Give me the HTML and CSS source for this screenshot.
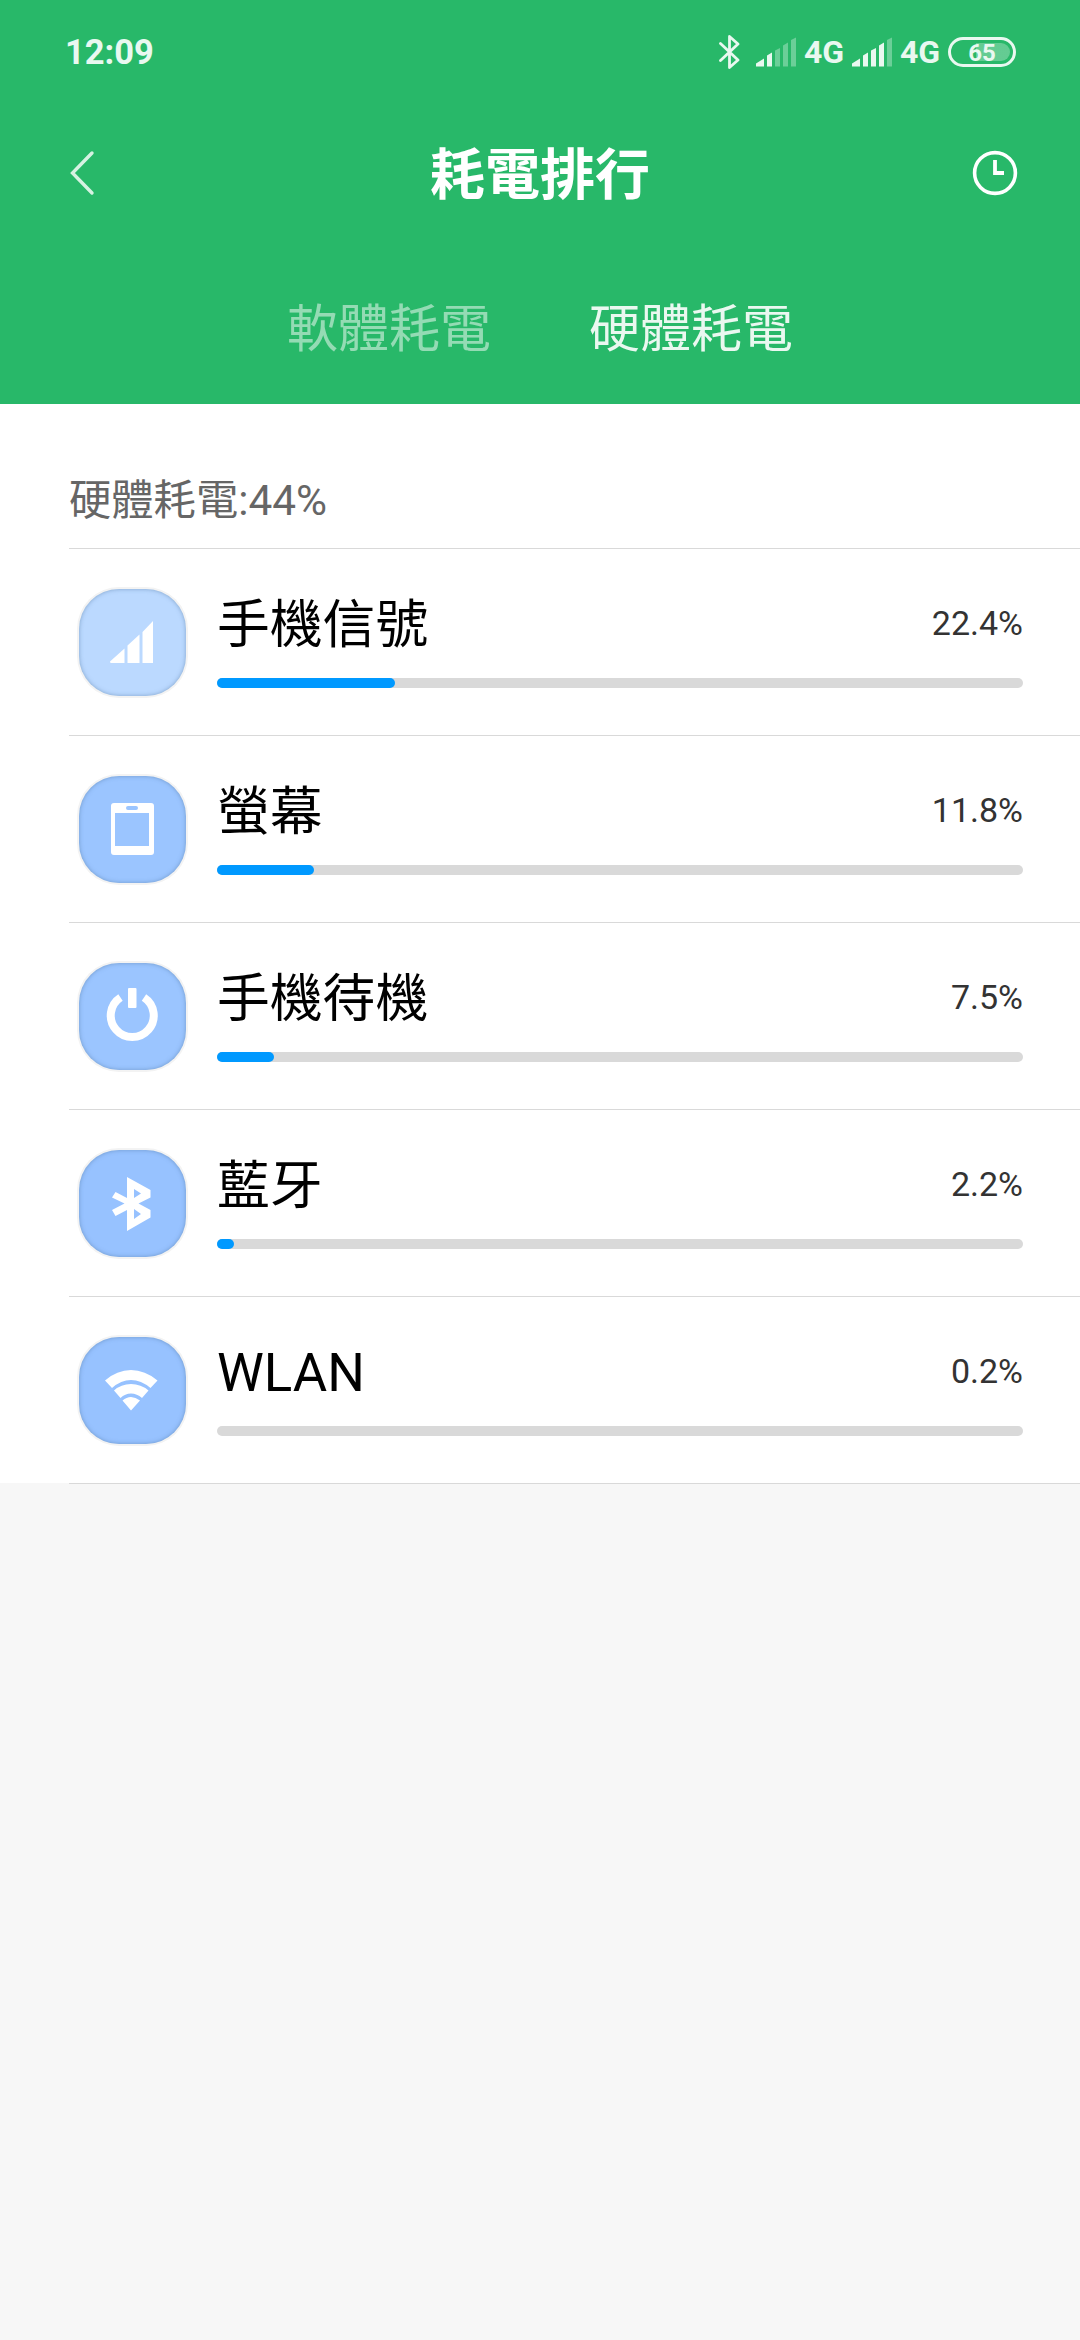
FILE: index.html
```html
<!DOCTYPE html>
<html lang="zh-Hant">
<head>
<meta charset="utf-8">
<title>耗電排行</title>
<link rel="stylesheet" href="styles.css">
</head>
<body>
<header class="header">
  <div class="status">
    <span class="clock">12:09</span>
    <div class="status-icons">
      <svg class="bt" width="22" height="36" viewBox="0 0 22 36"><path d="M1.500 9.500 19 26 10.500 33.500V2.500L19 10 1.500 26.500" fill="none" stroke="currentColor" stroke-width="2.800" stroke-linejoin="round" stroke-linecap="round"/></svg>
      <svg class="signal" width="40" height="30" viewBox="0 0 40 30"><path d="M0 29.500V26.500L8 21.500V29.500zM11 29.500V18.500L16 15.500V29.500z"/><path class="dim" d="M19 29.500V13.500L24 11V29.500zM27 29.500V8.500L32 5.500V29.500zM35 29.500V3L40 .5V29.500z"/></svg>
      <span class="net">4G</span>
      <svg class="signal" width="40" height="30" viewBox="0 0 40 30"><path d="M0 29.500V26.500L8 21.500V29.500zM11 29.500V18.500L16 15.500V29.500zM19 29.500V13.500L24 11V29.500zM27 29.500V8.500L32 5.500V29.500z"/><path class="dim" d="M35 29.500V3L40 .5V29.500z"/></svg>
      <span class="net">4G</span>
      <div class="battery"><span>65</span></div>
    </div>
  </div>
  <div class="titlebar">
    <svg width="30" height="50" viewBox="0 0 30 50"><path d="M25 5 5.500 25 25 45" fill="none" stroke="#d6f2e2" stroke-width="3.400" stroke-linecap="round"/></svg>
    <h1 class="title">耗電排行</h1>
    <svg width="46" height="56" viewBox="0 0 46 56" fill="none" stroke="#fff"><circle cx="23" cy="28" r="20.400" stroke-width="3.600"/><path d="M23 15V28H32" stroke-width="3.800"/></svg>
  </div>
  <nav class="tabs"><span class="tab">軟體耗電</span><span class="tab active">硬體耗電</span></nav>
</header>
<main class="panel">
  <h2 class="summary">硬體耗電:44%</h2>
  <ul class="list">
    <li class="row">
      <div class="icon pale"><svg width="107" height="107" viewBox="0 0 107 107"><path d="M31 72.500 45.500 59.500V74H31.500zM48.500 56.500 60.500 45.500V74H48.500zM63.500 43 74 32V74H63.500z"/></svg></div>
      <div class="body"><div class="line"><span class="name">手機信號</span><span class="pct">22.4%</span></div><div class="track"><div class="fill" style="width:178px"></div></div></div>
    </li>
    <li class="row">
      <div class="icon"><svg width="107" height="107" viewBox="0 0 107 107"><path fill-rule="evenodd" d="M35 27H72Q75 27 75 30V76Q75 79 72 79H35Q32 79 32 76V30Q32 27 35 27zM36 37V70H70V37zM49 30A2 2 0 0 0 49 34H57A2 2 0 0 0 57 30z"/></svg></div>
      <div class="body"><div class="line"><span class="name">螢幕</span><span class="pct">11.8%</span></div><div class="track"><div class="fill" style="width:97px"></div></div></div>
    </li>
    <li class="row">
      <div class="icon"><svg width="107" height="107" viewBox="0 0 107 107"><rect x="49" y="25" width="8.500" height="20" rx="1"/><path d="M41.500 34.500A21.500 21.500 0 1 0 65 34.500" fill="none" stroke="#fff" stroke-width="8"/></svg></div>
      <div class="body"><div class="line"><span class="name">手機待機</span><span class="pct">7.5%</span></div><div class="track"><div class="fill" style="width:57px"></div></div></div>
    </li>
    <li class="row">
      <div class="icon deep"><svg width="107" height="107" viewBox="0 0 107 107"><path fill-rule="evenodd" d="M48 27 71.500 40V47.500L59.500 53.500 71.500 60V67.500L48 81V60L36.500 66 33 60 45.500 53.500 33 47.500 36.500 42 48 48zM55 39V48L62 43.500zM55 59V69L62 64z"/></svg></div>
      <div class="body"><div class="line"><span class="name">藍牙</span><span class="pct">2.2%</span></div><div class="track"><div class="fill" style="width:17px"></div></div></div>
    </li>
    <li class="row">
      <div class="icon deep"><svg width="107" height="107" viewBox="0 0 107 107"><path d="M26 43.500Q38 33 52 33T78.500 43.500L71.500 51Q62 43 52 43T33 51zM35 53.500Q42 47 52 47T69.500 53.500L63 61Q58 56.500 52 56.500T41.500 61zM43.500 63.500Q47.500 60 52 60T61 63.500L52 73.500z"/></svg></div>
      <div class="body"><div class="line"><span class="name">WLAN</span><span class="pct">0.2%</span></div><div class="track"></div></div>
    </li>
  </ul>
</main>
</body>
</html>
```
FILE: styles.css
```css
* { box-sizing: border-box; }
body {
  margin: 0;
  min-height: 2340px;
  background: #f7f7f7;
  font-family: Roboto, "Noto Sans CJK TC", sans-serif;
}
svg { display: block; }
.header {
  height: 404px;
  background: #28b869;
  color: #fff;
}
.status {
  height: 103px;
  padding: 0 64px 0 65px;
  display: flex;
  align-items: center;
  justify-content: space-between;
  color: #e9f8f0;
}
.clock { font-size: 34.500px; font-weight: 700; line-height: 42px; padding-top: 1px; }
.status-icons { display: flex; align-items: center; }
.bt { margin-right: 15px; }
.signal { fill: currentColor; }
.dim { opacity: .35; }
.net {
  width: 56px;
  padding: 1px 0 0 8px;
  font-size: 32px;
  font-weight: 700;
  line-height: 40px;
}
.battery {
  width: 68px;
  height: 30px;
  border: 3px solid currentColor;
  border-radius: 15px;
  padding: 3px;
  display: flex;
}
.battery span {
  flex: 1;
  border-radius: 9px;
  background: linear-gradient(90deg, transparent 40%, rgba(255,255,255,.28) 40%);
  font-size: 24px;
  font-weight: 700;
  line-height: 20px;
  text-align: center;
}
.titlebar {
  height: 140px;
  padding: 0 62px 0 67px;
  display: flex;
  align-items: center;
  justify-content: space-between;
}
.title {
  margin: 0;
  padding: 4px 0 0 11px;
  font-size: 55px;
  font-weight: 700;
  line-height: 80px;
}
.tabs {
  height: 161px;
  padding-top: 49px;
  display: flex;
  justify-content: center;
  gap: 98px;
  font-size: 51px;
  line-height: 76px;
}
.tab { opacity: .5; }
.tab.active { opacity: .9; }
.panel { padding-left: 69px; background: linear-gradient(#fff, #fff) no-repeat 0 0 / 100% calc(100% - 1px); }
.summary {
  height: 144px;
  margin: 0;
  padding-top: 65px;
  font-size: 42.300px;
  font-weight: 400;
  line-height: 64px;
  color: #666;
}
.list {
  margin: 0;
  padding: 0;
  list-style: none;
  border-top: 1px solid #d9d9d9;
}
.row {
  height: 187px;
  padding: 40px 57px 0 10px;
  border-bottom: 1px solid #d9d9d9;
  display: flex;
  gap: 31px;
}
.icon {
  width: 107px;
  height: 107px;
  border-radius: 40px;
  background: #9bc5ff;
  box-shadow: inset 0 0 4px rgba(70,110,150,.5), 0 0 0 2px #f3f3f3;
}
.icon.pale { background: #bbd9ff; }
.icon.deep { background: #97c2ff; }
.icon svg { fill: #fff; }
.body { flex: 1; }
.line {
  height: 89px;
  display: flex;
  justify-content: space-between;
}
.name { font-size: 52.800px; line-height: 72px; color: #000; }
.pct { font-size: 34px; line-height: 68px; color: #333; }
.track {
  height: 10px;
  border-radius: 5px;
  background: #d9d9d9;
}
.fill {
  height: 10px;
  border-radius: 5px;
  background: #0099ff;
}
```
